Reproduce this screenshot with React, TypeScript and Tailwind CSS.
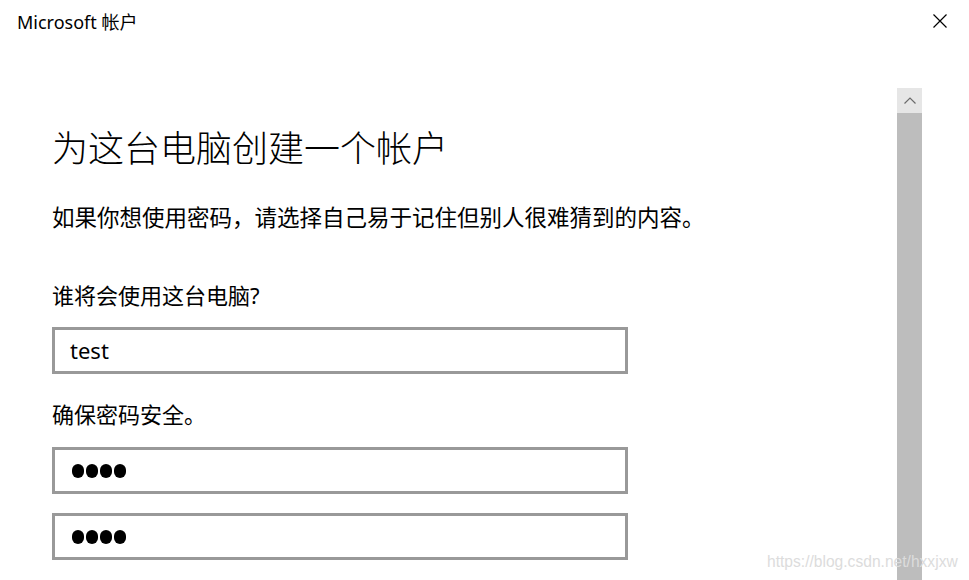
const cjk = "font-['Noto_Sans','Noto_Sans_CJK_SC',sans-serif]";

const PasswordDots = () => (
	<div className="ml-[2px] flex items-center gap-[2px]">
		{[0, 1, 2, 3].map((i) => (
			<span key={i} className="block w-[12px] h-[14px] rounded-full bg-black" />
		))}
	</div>
);

const Field = ({ children, className = '' }: { children?: React.ReactNode; className?: string }) => (
	<div className={`w-[576px] h-[47px] border-[3px] border-[#999999] bg-white flex items-center pl-[15px] ${className}`}>
		{children}
	</div>
);

export default function App() {
	return (
		<div className={`relative w-[969px] h-[580px] bg-white text-black overflow-hidden ${cjk}`}>
			{/* Title bar */}
			<div className="h-[88px] flex items-start justify-between">
				<div className="pl-[17px] pt-[11px] text-[18px] leading-[22px]">Microsoft 帐户</div>
				<div className="pt-[14px] pr-[22px]">
					<svg width="14" height="14" viewBox="0 0 14 14" fill="none" stroke="#000" strokeWidth="1.2">
						<path d="M0.5 0.5 L13.5 13.5 M13.5 0.5 L0.5 13.5" />
					</svg>
				</div>
			</div>

			{/* Body */}
			<div className="flex h-[492px]">
				<div className="flex-1 pl-[52px] pt-[43px] flex flex-col items-start">
					<h1 className="text-[36px] leading-[36px] font-light">为这台电脑创建一个帐户</h1>
					<p className="mt-[40px] text-[22.5px] leading-[22px]">
						如果你想使用密码，请选择自己易于记住但别人很难猜到的内容。
					</p>
					<div className="mt-[55px] text-[22px] leading-[22px]">谁将会使用这台电脑?</div>
					<Field className="mt-[21px]">
						<span className="text-[22px] leading-[22px] -mt-[2px]">test</span>
					</Field>
					<div className="mt-[29px] text-[22px] leading-[22px]">确保密码安全。</div>
					<Field className="mt-[22px]">
						<PasswordDots />
					</Field>
					<Field className="mt-[19px]">
						<PasswordDots />
					</Field>
				</div>

				{/* Scrollbar */}
				<div className="w-[25px] flex flex-col">
					<div className="h-[25px] bg-[#e6e6e6] flex items-center justify-center">
						<svg width="12" height="7" viewBox="0 0 12 7" fill="none" stroke="#6b6b6b" strokeWidth="1.2">
							<path d="M0.5 6.5 L6 1 L11.5 6.5" />
						</svg>
					</div>
					<div className="flex-1 bg-[#bdbdbd]" />
				</div>
				<div className="w-[47px]" />
			</div>

			{/* Watermark */}
			<div className="absolute left-[767px] top-[553px] text-[15.6px] leading-[18px] text-[#dcdcdc] font-['Liberation_Sans',Arial,sans-serif]">
				https://blog.csdn.net/hxxjxw
			</div>
		</div>
	);
}
